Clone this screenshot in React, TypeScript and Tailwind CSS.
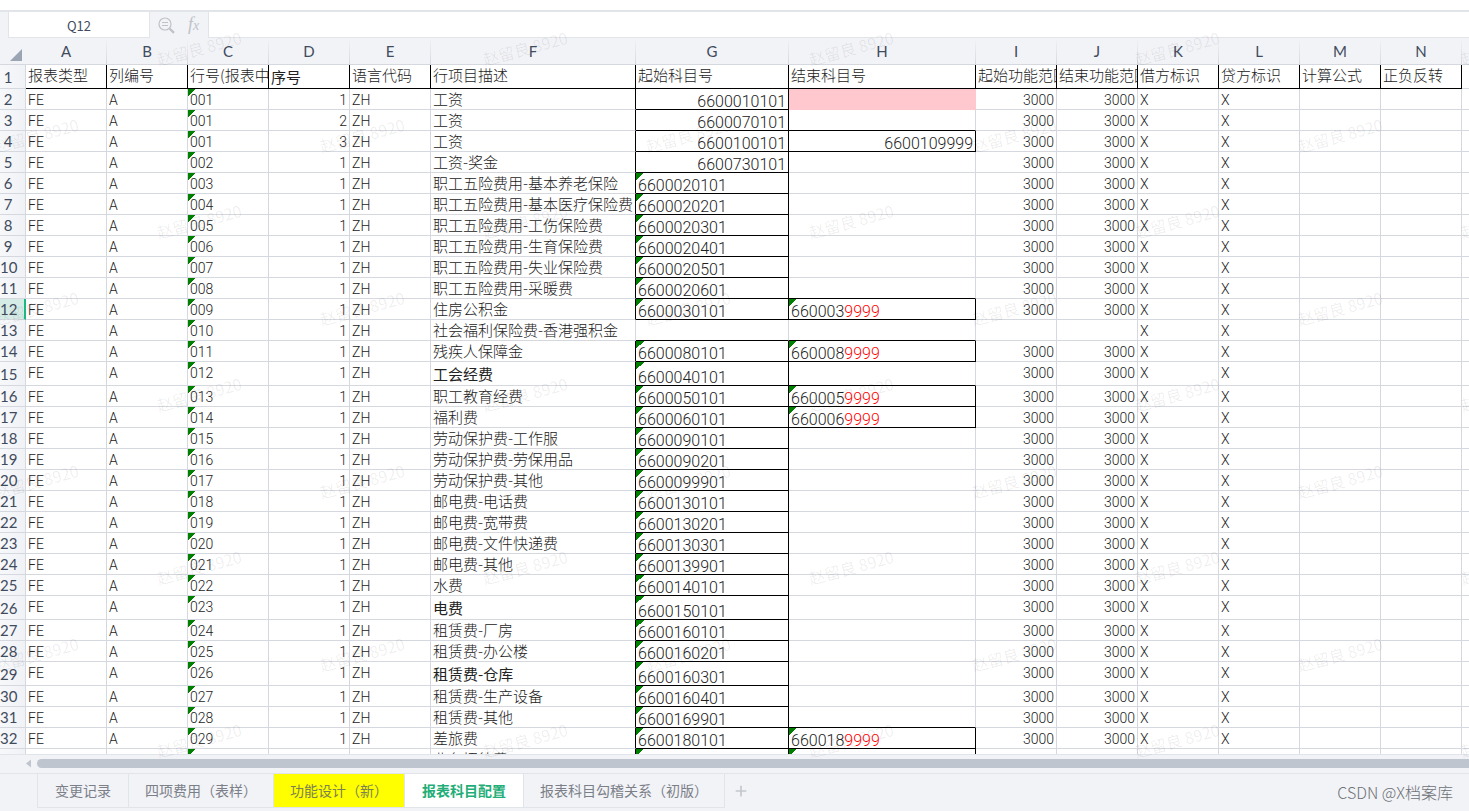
import clsx from 'clsx';
import { Plus } from 'lucide-react';

type Row = {
    code: string;
    seq?: number;
    desc: string;
    from?: string;
    to?: string;
    noRange?: boolean;
    tall?: boolean;
    // description is set in the darker face
    dark?: boolean;
};

const columns = [
    { letter: 'A', title: '报表类型', width: 'w-[81px]' },
    { letter: 'B', title: '列编号', width: 'w-[81px]' },
    { letter: 'C', title: '行号(报表中)', width: 'w-[81px]' },
    { letter: 'D', title: '序号', width: 'w-[81px]' },
    { letter: 'E', title: '语言代码', width: 'w-[81px]' },
    { letter: 'F', title: '行项目描述', width: 'w-[205px]' },
    { letter: 'G', title: '起始科目号', width: 'w-[153px]' },
    { letter: 'H', title: '结束科目号', width: 'w-[187px]' },
    { letter: 'I', title: '起始功能范围', width: 'w-[81px]' },
    { letter: 'J', title: '结束功能范围', width: 'w-[81px]' },
    { letter: 'K', title: '借方标识', width: 'w-[81px]' },
    { letter: 'L', title: '贷方标识', width: 'w-[81px]' },
    { letter: 'M', title: '计算公式', width: 'w-[81px]' },
    { letter: 'N', title: '正负反转', width: 'w-[81px]' },
];

const rows: Row[] = [
    { code: '001', seq: 1, desc: '工资', from: '6600010101' },
    { code: '001', seq: 2, desc: '工资', from: '6600070101' },
    { code: '001', seq: 3, desc: '工资', from: '6600100101', to: '6600109999' },
    { code: '002', desc: '工资-奖金', from: '6600730101' },
    { code: '003', desc: '职工五险费用-基本养老保险', from: '6600020101' },
    { code: '004', desc: '职工五险费用-基本医疗保险费', from: '6600020201' },
    { code: '005', desc: '职工五险费用-工伤保险费', from: '6600020301' },
    { code: '006', desc: '职工五险费用-生育保险费', from: '6600020401' },
    { code: '007', desc: '职工五险费用-失业保险费', from: '6600020501' },
    { code: '008', desc: '职工五险费用-采暖费', from: '6600020601' },
    { code: '009', desc: '住房公积金', from: '6600030101', to: '6600039999' },
    { code: '010', desc: '社会福利保险费-香港强积金', noRange: true },
    { code: '011', desc: '残疾人保障金', from: '6600080101', to: '6600089999' },
    { code: '012', desc: '工会经费', from: '6600040101', tall: true, dark: true },
    { code: '013', desc: '职工教育经费', from: '6600050101', to: '6600059999' },
    { code: '014', desc: '福利费', from: '6600060101', to: '6600069999' },
    { code: '015', desc: '劳动保护费-工作服', from: '6600090101' },
    { code: '016', desc: '劳动保护费-劳保用品', from: '6600090201' },
    { code: '017', desc: '劳动保护费-其他', from: '6600099901' },
    { code: '018', desc: '邮电费-电话费', from: '6600130101' },
    { code: '019', desc: '邮电费-宽带费', from: '6600130201' },
    { code: '020', desc: '邮电费-文件快递费', from: '6600130301' },
    { code: '021', desc: '邮电费-其他', from: '6600139901' },
    { code: '022', desc: '水费', from: '6600140101' },
    { code: '023', desc: '电费', from: '6600150101', tall: true, dark: true },
    { code: '024', desc: '租赁费-厂房', from: '6600160101' },
    { code: '025', desc: '租赁费-办公楼', from: '6600160201' },
    { code: '026', desc: '租赁费-仓库', from: '6600160301', tall: true, dark: true },
    { code: '027', desc: '租赁费-生产设备', from: '6600160401' },
    { code: '028', desc: '租赁费-其他', from: '6600169901' },
    { code: '029', desc: '差旅费', from: '6600180101', to: '6600189999' },
    { code: '030', desc: '业务招待费', from: '6600190101', to: '6600199999' },
];

const tabs = [
    { name: '变更记录', style: 'px-[17px] text-[#7b8088]' },
    { name: '四项费用（表样）', style: 'px-4 text-[#7b8088]' },
    { name: '功能设计（新）', style: 'bg-[#ffff00] px-4 text-[#7b8050]' },
    { name: '报表科目配置', style: 'bg-white px-[17px] font-bold text-[#1fae78]' },
    { name: '报表科目勾稽关系（初版）', style: 'px-4 text-[#7b8088]' },
];

const SANS = "font-['Noto_Sans_CJK_SC',sans-serif]";
const LATIN = "font-['Roboto','Noto_Sans_CJK_SC',sans-serif]";
const FLAG = 'bg-[linear-gradient(135deg,#008000_50%,transparent_50%)] bg-[length:8px_8px] bg-no-repeat';

function FormulaBar() {
    return (
        <div className="flex h-[28px] shrink-0 border-t-2 border-[#e1e4e9] bg-[#f2f3f7]">
            <input
                aria-label="名称框"
                defaultValue="Q12"
                className="ml-2 w-[142px] border-x border-b border-[#e1e4e9] bg-white pt-0.5 text-center text-[13px] text-[#414b5e] outline-none"
            />
            <div className="flex w-[58px] items-center gap-3 pt-px pl-2 text-[#bfc2c8]">
                <button aria-label="查找" className="size-[18px]">
                    <svg viewBox="0 0 18 18" className="size-full" fill="none" stroke="currentColor" strokeWidth="1.2">
                        <circle cx="7" cy="7" r="6" />
                        <path d="M4 5.5h6M4 8.5h6" />
                        <path d="M11.5 11.5 16 15.8" strokeWidth="2.4" />
                    </svg>
                </button>
                <button aria-label="插入函数" className="pb-0.5 font-['Liberation_Serif',serif] text-lg leading-5 italic">
                    f<span className="text-sm">x</span>
                </button>
            </div>
            <input aria-label="编辑栏" className="min-w-0 flex-1 border-b border-l border-[#e1e4e9] bg-white px-2 text-sm outline-none" />
        </div>
    );
}

function RowHeader({ n, active }: { n: number; active?: boolean }) {
    return (
        <th
            scope="row"
            className={clsx(
                "border-b border-[#d5d8de] pr-[9px] text-center font-['Lato',sans-serif] text-[15px] leading-5 font-normal text-[#414b5e]",
                active ? 'border-r-2 border-r-[#1eb980] bg-[#d5ebe5]' : 'border-r bg-linear-to-r from-[#f7f8fa] to-[#f0f2f6]',
            )}
        >
            {n}
        </th>
    );
}

function SheetRow({ row, next, n }: { row: Row; next?: Row; n: number }) {
    const cell = 'overflow-hidden border-r border-b border-[#d5d8de] px-0.5 whitespace-nowrap';
    const text = clsx(cell, LATIN, 'pt-0.5 align-top leading-[18px]');
    const account = clsx(cell, LATIN, 'pt-1.5 align-bottom text-base leading-[14px]');
    const flagged = n > 5;
    const to = row.to ?? '';

    return (
        <tr className={row.tall ? 'h-6' : 'h-[21px]'}>
            <RowHeader n={n} active={n === 12} />
            <td className={text}>FE</td>
            <td className={text}>A</td>
            <td className={clsx(text, FLAG)}>{row.code}</td>
            <td className={clsx(text, 'text-right')}>{row.seq ?? 1}</td>
            <td className={text}>ZH</td>
            <td className={clsx(cell, 'text-[15px]', row.from && 'border-r-black', row.dark ? 'font-normal' : 'align-top')}>{row.desc}</td>
            <td
                className={clsx(
                    account,
                    row.from && 'border-r-black',
                    (row.from || next?.from) && 'border-b-black',
                    flagged ? row.from && FLAG : 'text-right',
                )}
            >
                {row.from}
            </td>
            <td
                className={clsx(
                    account,
                    row.to && 'border-r-black',
                    (row.to || next?.to) && 'border-b-black',
                    flagged ? row.to && FLAG : 'text-right',
                    n === 2 && 'border-r-[#ffc7ce] border-b-[#ffc7ce] bg-[#ffc7ce]',
                )}
            >
                {flagged ? (
                    <>
                        {to.slice(0, 6)}
                        <span className="text-[#ff0000]">{to.slice(6)}</span>
                    </>
                ) : (
                    to
                )}
            </td>
            <td className={clsx(text, 'text-right')}>{!row.noRange && '3000'}</td>
            <td className={clsx(text, 'text-right')}>{!row.noRange && '3000'}</td>
            <td className={text}>X</td>
            <td className={text}>X</td>
            <td className={cell}></td>
            <td className={cell}></td>
            <td className="border-b border-[#d5d8de]"></td>
        </tr>
    );
}

function Sheet() {
    return (
        <div className="min-h-0 flex-1 overflow-hidden border-b border-[#e1e4e9]">
            <table className="w-full min-w-[1462px] table-fixed border-separate border-spacing-0 text-sm leading-5 font-light text-[#222]">
                <colgroup>
                    <col className="w-[26px]" />
                    {columns.map((c) => (
                        <col key={c.letter} className={c.width} />
                    ))}
                    <col />
                </colgroup>
                <thead>
                    <tr className="h-[27px] bg-[#f2f3f7] font-['Lato',sans-serif] text-[15px] text-[#414b5e]">
                        <td className="border-b border-[#d5d8de] pt-2 pl-[10px]">
                            <svg viewBox="0 0 12 12" className="size-3 fill-[#9aa4b3]">
                                <path d="M12 0v12H0z" />
                            </svg>
                        </td>
                        {columns.map((c) => (
                            <th
                                key={c.letter}
                                scope="col"
                                className="border-b border-[#d5d8de] bg-[linear-gradient(to_bottom,#f2f3f7,#d5d8de)] bg-[length:1px_100%] bg-right bg-no-repeat pr-px font-normal"
                            >
                                {c.letter}
                            </th>
                        ))}
                        <th className="border-b border-[#d5d8de]"></th>
                    </tr>
                </thead>
                <tbody>
                    <tr className="h-6">
                        <RowHeader n={1} />
                        {columns.map((c) => (
                            <td
                                key={c.letter}
                                className={clsx(
                                    'overflow-hidden border-r border-b border-black pl-0.5 text-[15px] whitespace-nowrap',
                                    c.letter === 'D' ? 'font-normal' : 'align-top',
                                )}
                            >
                                {c.title}
                            </td>
                        ))}
                        <td className="border-b border-[#d5d8de]"></td>
                    </tr>
                    {rows.map((row, i) => (
                        <SheetRow key={i} row={row} next={rows[i + 1]} n={i + 2} />
                    ))}
                </tbody>
            </table>
        </div>
    );
}

function SheetTabs() {
    return (
        <div className="flex h-[38px] shrink-0 items-start border-t border-[#e1e4e9] pl-[37px]">
            <div className="flex h-[34px] border-b border-l border-[#e1e4e9]">
                {tabs.map((tab) => (
                    <button key={tab.name} className={clsx('border-r border-[#e1e4e9] pb-0.5 text-sm whitespace-nowrap', tab.style)}>
                        {tab.name}
                    </button>
                ))}
            </div>
            <button aria-label="新建工作表" className="ml-2 flex h-[34px] items-center text-[#c3c7cd]">
                <Plus className="size-4" strokeWidth={2.5} />
            </button>
            <span className="mt-1.5 mr-4 ml-auto text-base leading-6 font-light text-[#6d7176]">CSDN @X档案库</span>
        </div>
    );
}

function Watermarks() {
    const marks = [];
    for (let y = 0; y < 10; y++) {
        for (let x = 0; x < 5; x++) {
            const even = y % 2 === 0;
            marks.push({ left: (even ? 199 : 36) + x * 326, top: (even ? 48 : 135) + Math.floor(y / 2) * 173 });
        }
    }
    return (
        <div aria-hidden="true" className="pointer-events-none absolute inset-0 overflow-hidden">
            {marks.map((m) => (
                <span
                    key={`${m.left}-${m.top}`}
                    style={m}
                    className="absolute -translate-x-1/2 -translate-y-1/2 -rotate-15 text-base leading-5 whitespace-nowrap text-black/7"
                >
                    赵留良 8920
                </span>
            ))}
        </div>
    );
}

export default function App() {
    return (
        <div className={clsx('relative flex h-screen flex-col overflow-hidden bg-[#f2f3f7]', SANS)}>
            <div className="h-2.5 shrink-0 bg-white" />
            <FormulaBar />
            <div className="flex min-h-0 flex-1 flex-col bg-white">
                <Sheet />
            </div>
            <div className="flex h-[18px] shrink-0 items-start gap-1.5 pt-1 pl-[26px]">
                <svg viewBox="0 0 5 8" className="h-[9px] w-[5px] fill-[#bfc5cf]">
                    <path d="M5 0v8L0 4z" />
                </svg>
                <div className="h-[9px] flex-1 rounded-l-full bg-[#bfc5cf]" />
            </div>
            <SheetTabs />
            <Watermarks />
        </div>
    );
}
